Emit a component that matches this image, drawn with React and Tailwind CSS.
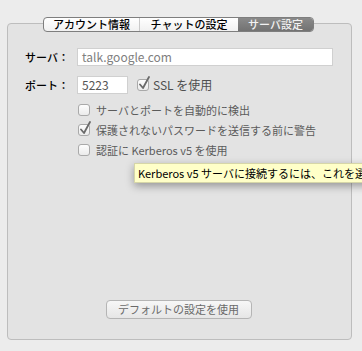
import React from "react";

const font = { fontFamily: '"Noto Sans CJK JP", "DejaVu Sans", sans-serif' };

function Check({ checked }) {
  return (
    <span className="relative inline-block w-[12px] h-[12px] shrink-0">
      <span className="absolute inset-0 rounded-[3px] border border-[#a9a9a9] bg-gradient-to-b from-[#fdfdfd] to-[#ebebeb]" />
      {checked && (
        <svg className="absolute left-[1px] top-[-3px]" width="13" height="14" viewBox="0 0 13 14">
          <path d="M2 8.5 L5 12 L11 1" fill="none" stroke="#6a6a6a" strokeWidth="1.8" strokeLinecap="round" strokeLinejoin="round" />
        </svg>
      )}
    </span>
  );
}

export default function App() {
  return (
    <div className="w-[362px] h-[351px] bg-[#ececec] relative overflow-hidden text-[11px] leading-none" style={font}>
      <div className="pt-[17px] pl-[7px] flex flex-col">
        {/* tabs */}
        <div className="relative z-10 flex h-[15px] ml-[36px] w-[271px]">
          <div className="flex flex-1 h-full rounded-[4px] border border-[#7e7e7e] bg-gradient-to-b from-[#ffffff] to-[#f1f1f1] overflow-hidden">
            <div className="w-[96px] flex items-center justify-center text-black font-medium border-r border-[#c9c9c9]">アカウント情報</div>
            <div className="w-[98px] flex items-center justify-center text-black font-medium">チャットの設定</div>
            <div className="flex-1 flex items-center justify-center text-[#f2f2f2] font-medium bg-gradient-to-b from-[#8a8a8a] to-[#727272]">サーバ設定</div>
          </div>
        </div>
        {/* panel */}
        <div className="-mt-[9px] w-[345px] h-[317px] rounded-[4px] border border-[#bdbdbd] bg-[#e3e3e3] flex flex-col pt-[24px]">
          <div className="flex items-center h-[18px]">
            <div className="w-[62px] text-right text-black font-medium pr-[1px]">サーバ：</div>
            <div className="ml-[7px] w-[256px] h-[18px] bg-white border border-[#d0d0d0] flex items-center pl-[4px] text-[#808080] text-[12px]">talk.google.com</div>
          </div>
          <div className="flex items-center h-[18px] mt-[10px]">
            <div className="w-[62px] text-right text-black font-medium pr-[1px]">ポート：</div>
            <div className="ml-[7px] w-[51px] h-[18px] bg-white border border-[#d0d0d0] flex items-center pl-[4px] text-[#555] text-[12px]">5223</div>
            <div className="ml-[9px] flex items-center gap-[4px] text-[#4f4f4f]">
              <Check checked />
              <span className="text-[12px]">SSL を使用</span>
            </div>
          </div>
          <div className="flex flex-col ml-[70px] mt-[10px] gap-[8px] text-[#5b5b5b]">
            <div className="flex items-center gap-[6px] h-[12px]"><Check /><span>サーバとポートを自動的に検出</span></div>
            <div className="flex items-center gap-[6px] h-[12px]"><Check checked /><span>保護されないパスワードを送信する前に警告</span></div>
            <div className="flex items-center gap-[6px] h-[12px]"><Check /><span>認証に Kerberos v5 を使用</span></div>
          </div>
          <div className="flex-1" />
          <div className="flex justify-center mb-[20px]">
            <div className="ml-[-2px] w-[146px] h-[19px] rounded-[4px] border border-[#b5b5b5] bg-gradient-to-b from-[#f7f7f7] to-[#e6e6e6] flex items-center justify-center text-[#6a6a6a]">デフォルトの設定を使用</div>
          </div>
        </div>
      </div>
      {/* tooltip */}
      <div className="absolute left-[134px] top-[163px] h-[20px] pl-[3px] pr-[6px] whitespace-nowrap bg-[#ffffc8] border border-[#d6d6a8] shadow-[0_3px_8px_rgba(0,0,0,0.35)] flex items-center text-black text-[11px]">
        Kerberos v5 サーバに接続するには、これを選択します。
      </div>
    </div>
  );
}
